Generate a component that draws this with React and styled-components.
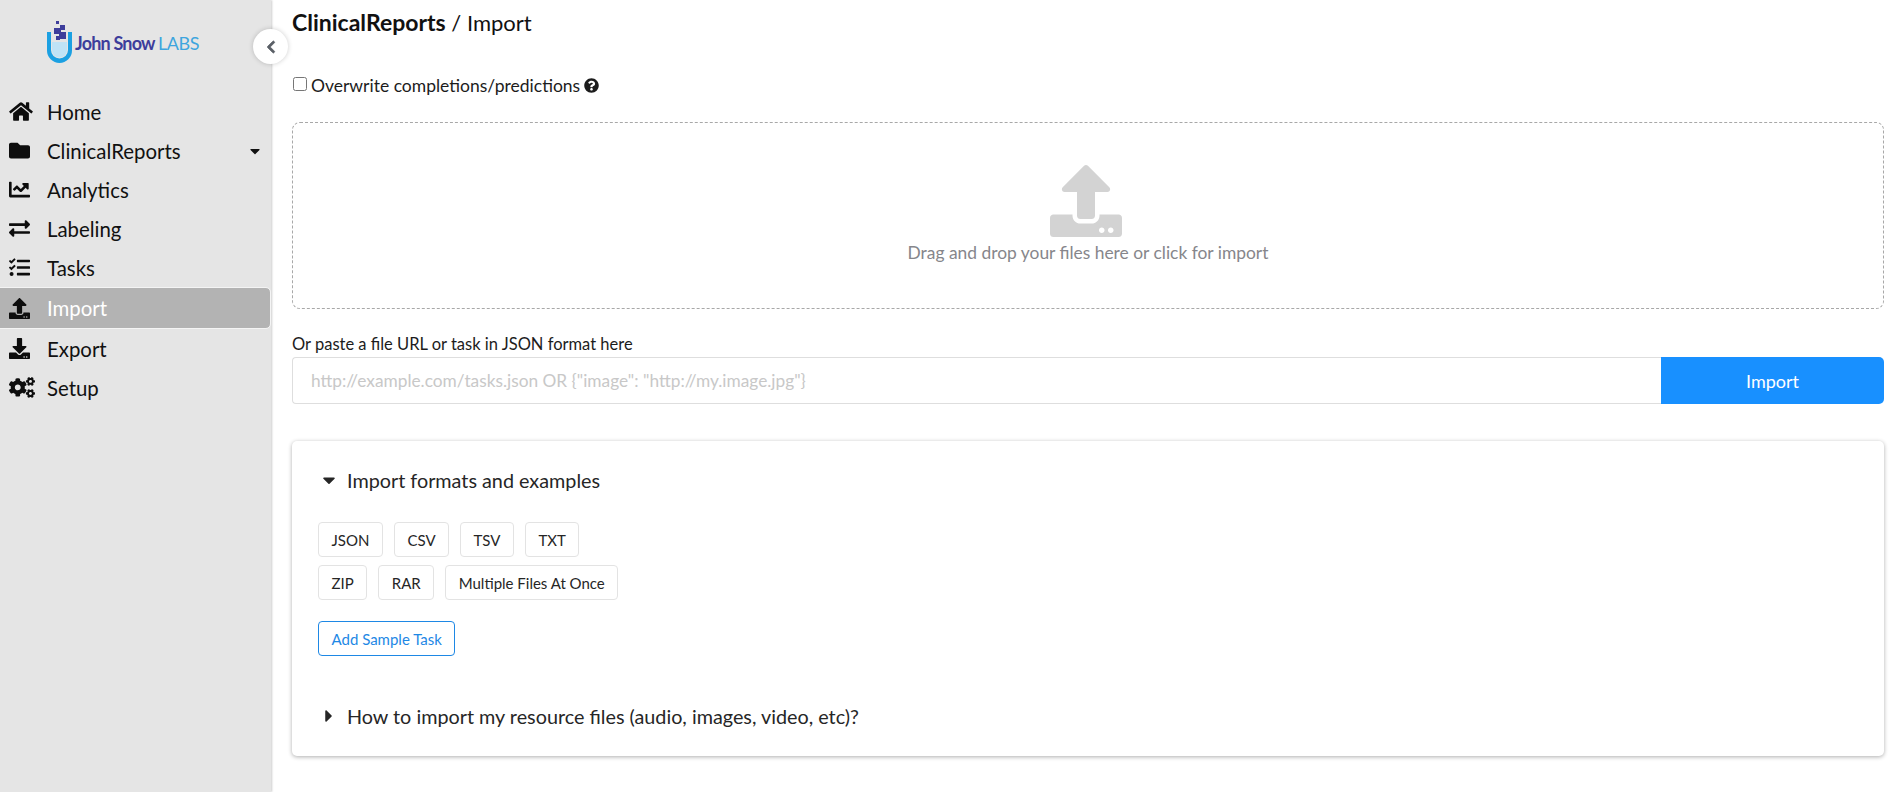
import React from 'react';
import styled, { createGlobalStyle } from 'styled-components';
import {
  FaHome, FaFolder, FaChartLine, FaExchangeAlt, FaTasks, FaUpload, FaDownload,
  FaCogs, FaCaretDown, FaCaretRight, FaChevronLeft, FaQuestionCircle,
} from 'react-icons/fa';

const GlobalStyle = createGlobalStyle`
  html, body { margin: 0; padding: 0; background: #fff; }
  body { font-family: Lato, "Open Sans", sans-serif; color: #1a1a1a; overflow: hidden; }
  * { box-sizing: border-box; }
`;

const Page = styled.div`
  display: flex;
  width: 1892px;
  height: 792px;
`;

const Sidebar = styled.aside`
  position: relative;
  flex: 0 0 271px;
  background: #e5e5e5;
  box-shadow: 1px 0 2px rgba(0, 0, 0, 0.2);
`;

const LogoRow = styled.div`
  display: flex;
  align-items: center;
  height: 92px;
  padding: 0 0 9px 47px;
`;

const LogoText = styled.span`
  margin-left: 3px;
  margin-top: 3px;
  font-size: 18px;
  font-weight: 700;
  letter-spacing: -0.8px;
  color: #3d3d9b;
  white-space: nowrap;
`;

const LogoLabs = styled.span`
  font-weight: 400;
  letter-spacing: -0.4px;
  color: #3ea5de;
`;

const Collapse = styled.button`
  position: absolute;
  top: 29px;
  left: 253px;
  width: 35px;
  height: 35px;
  display: flex;
  align-items: center;
  justify-content: center;
  padding: 0;
  border: 0;
  border-radius: 50%;
  background: #fff;
  color: #5a5f66;
  font-size: 14px;
  box-shadow: 0 0 5px rgba(0, 0, 0, 0.2);

  svg {
    stroke: currentColor;
    stroke-width: 30;
  }
`;

const Menu = styled.nav`
  display: flex;
  flex-direction: column;
`;

const MenuItem = styled.a`
  display: flex;
  align-items: center;
  width: 270px;
  height: ${p => (p.$active ? '40px' : '39px')};
  margin: ${p => (p.$active ? '1px 0' : '0')};
  padding-left: 9px;
  font-size: 20.4px;
  color: ${p => (p.$active ? '#fff' : '#111')};
  background: ${p => (p.$active ? '#b3b3b3' : 'transparent')};
  border-radius: ${p => (p.$active ? '0 4px 4px 0' : '0')};
  outline: ${p => (p.$active ? '1px solid #f4f4f4' : 'none')};
`;

const MenuIcon = styled.span`
  display: flex;
  align-items: center;
  width: 38px;
  color: #0d0d0d;

  svg {
    flex: none;
    width: ${p => p.$width || 21}px;
    height: 21px;
  }
`;

const MenuCaret = styled.span`
  display: flex;
  margin-left: auto;
  margin-right: 7px;
  font-size: 16px;
  color: #111;
`;

const Main = styled.main`
  flex: 1;
  padding: 7px 8px 0 21px;
`;

const Title = styled.h1`
  margin: 0;
  height: 30px;
  font-size: 22px;
  line-height: 30px;
  font-weight: 400;
  color: #111;
`;

const TitleProject = styled.b`
  font-size: 23px;
`;

const OverwriteRow = styled.label`
  display: flex;
  align-items: center;
  height: 20px;
  margin-top: 38px;
  font-size: 17.5px;
  color: #1c1c1c;
`;

const Check = styled.input`
  width: 14px;
  height: 14px;
  margin: 0 4px 3px 1px;
`;

const HelpIcon = styled(FaQuestionCircle)`
  margin-left: 4px;
  font-size: 15px;
  color: #1c1c1c;
`;

const Dropzone = styled.div`
  display: flex;
  flex-direction: column;
  align-items: center;
  height: 187px;
  margin-top: 27px;
  padding-top: 42px;
  border: 1px dashed #a8a8a8;
  border-radius: 8px;
`;

const DropIcon = styled(FaUpload)`
  margin-left: -4px;
  font-size: 72px;
  color: #d3d3d3;
`;

const DropText = styled.div`
  margin-top: 5px;
  font-size: 17.4px;
  line-height: 22px;
  color: #86868b;
`;

const PasteLabel = styled.div`
  margin-top: 25px;
  font-size: 16.5px;
  line-height: 20px;
  color: #1c1c1c;
`;

const PasteRow = styled.form`
  display: flex;
  height: 47px;
  margin-top: 3px;
`;

const PasteInput = styled.input`
  flex: 1;
  padding: 0 18px;
  border: 1px solid #dedede;
  border-right: 0;
  border-radius: 4px 0 0 4px;
  font: 17.3px Lato, sans-serif;
  &::placeholder { color: #c8c8c8; opacity: 1; }
`;

const PasteButton = styled.button`
  flex: 0 0 223px;
  border: 0;
  border-radius: 0 5px 5px 0;
  background: #1890ff;
  color: #fff;
  font: 18px Lato, sans-serif;
`;

const Card = styled.section`
  height: 315px;
  margin-top: 37px;
  padding: 17px 26px 0;
  background: #fff;
  border-radius: 5px;
  box-shadow: 0 1px 4px rgba(0, 0, 0, 0.32);
`;

const Disclosure = styled.div`
  display: flex;
  align-items: center;
  height: 44px;
  font-size: 19.8px;
  color: #262626;
`;

const CaretSlot = styled.span`
  display: flex;
  justify-content: center;
  width: 22px;
  margin-right: 7px;
  font-size: 20px;
  color: #262626;
`;

const ButtonRow = styled.div`
  display: flex;
  gap: 11px;
  margin-bottom: 8px;
`;

const FirstRow = styled(ButtonRow)`
  margin-top: 20px;
`;

const FormatButton = styled.button`
  height: 35px;
  padding: 0 12.5px;
  background: #fff;
  border: 1px solid ${p => (p.$primary ? '#1e88e5' : '#e3e3e3')};
  border-radius: 4px;
  color: ${p => (p.$primary ? '#1e88e5' : '#262626')};
  font: 15px Lato, sans-serif;
`;

const SampleRow = styled.div`
  margin-top: 21px;
  margin-bottom: 38px;
`;

const items = [
  { label: 'Home', icon: <FaHome />, width: 24 },
  { label: 'ClinicalReports', icon: <FaFolder />, caret: true },
  { label: 'Analytics', icon: <FaChartLine /> },
  { label: 'Labeling', icon: <FaExchangeAlt /> },
  { label: 'Tasks', icon: <FaTasks /> },
  { label: 'Import', icon: <FaUpload />, active: true },
  { label: 'Export', icon: <FaDownload /> },
  { label: 'Setup', icon: <FaCogs />, width: 26 },
];

const Logo = () => (
  <svg width="25" height="42" viewBox="0 0 25 42">
    <rect x="9" y="0" width="3" height="3" fill="#3d3d9b" />
    <rect x="13" y="4" width="5" height="5" fill="#3d3d9b" />
    <rect x="7" y="7" width="7" height="6" fill="#3d3d9b" />
    <rect x="12" y="11" width="7" height="7" fill="#3d3d9b" />
    <rect x="9" y="15" width="4" height="4" fill="#3d3d9b" />
    <path d="M5 21h15v8a7.5 7.5 0 0 1-15 0z" fill="#bfe3f6" />
    <path d="M0 11h4v18a8.5 8.5 0 0 0 17 0V11h4v18.5a12.5 12.5 0 0 1-25 0z" fill="#1ba0e2" />
  </svg>
);

const App = () => (
  <Page>
    <GlobalStyle />
    <Sidebar>
      <LogoRow>
        <Logo />
        <LogoText>John Snow <LogoLabs>LABS</LogoLabs></LogoText>
      </LogoRow>
      <Collapse aria-label="Collapse"><FaChevronLeft /></Collapse>
      <Menu>
        {items.map(item => (
          <MenuItem key={item.label} $active={item.active}>
            <MenuIcon $width={item.width}>{item.icon}</MenuIcon>
            {item.label}
            {item.caret && <MenuCaret><FaCaretDown /></MenuCaret>}
          </MenuItem>
        ))}
      </Menu>
    </Sidebar>
    <Main>
      <Title><TitleProject>ClinicalReports</TitleProject> / Import</Title>
      <OverwriteRow>
        <Check type="checkbox" />
        Overwrite completions/predictions
        <HelpIcon />
      </OverwriteRow>
      <Dropzone>
        <DropIcon />
        <DropText>Drag and drop your files here or click for import</DropText>
      </Dropzone>
      <PasteLabel>Or paste a file URL or task in JSON format here</PasteLabel>
      <PasteRow>
        <PasteInput placeholder={'http://example.com/tasks.json OR {"image": "http://my.image.jpg"}'} />
        <PasteButton type="button">Import</PasteButton>
      </PasteRow>
      <Card>
        <Disclosure>
          <CaretSlot><FaCaretDown /></CaretSlot>
          Import formats and examples
        </Disclosure>
        <FirstRow>
          {['JSON', 'CSV', 'TSV', 'TXT'].map(f => <FormatButton key={f}>{f}</FormatButton>)}
        </FirstRow>
        <ButtonRow>
          {['ZIP', 'RAR', 'Multiple Files At Once'].map(f => <FormatButton key={f}>{f}</FormatButton>)}
        </ButtonRow>
        <SampleRow>
          <FormatButton $primary>Add Sample Task</FormatButton>
        </SampleRow>
        <Disclosure>
          <CaretSlot><FaCaretRight /></CaretSlot>
          How to import my resource files (audio, images, video, etc)?
        </Disclosure>
      </Card>
    </Main>
  </Page>
);

export default App;
